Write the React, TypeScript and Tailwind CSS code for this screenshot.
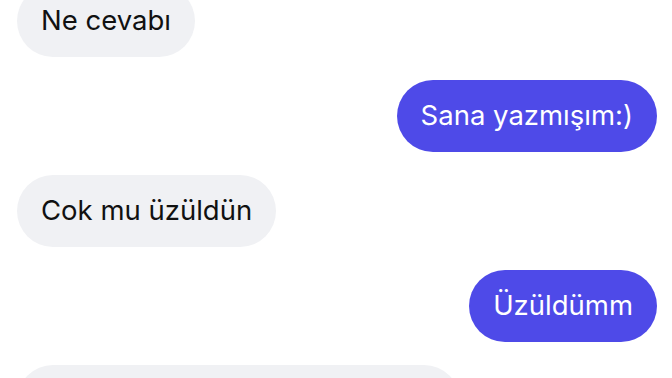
const MESSAGES = [
  { id: 1, text: "Ne cevabı", mine: false },
  { id: 2, text: "Sana yazmışım:)", mine: true },
  { id: 3, text: "Cok mu üzüldün", mine: false },
  { id: 4, text: "Üzüldümm", mine: true },
];

export default function App() {
  return (
    <div className="h-[378px] w-[672px] overflow-hidden bg-white font-['Inter','Liberation_Sans',sans-serif]">
      <div className="-mt-[15px] flex flex-col gap-[23px] pl-[17px] pr-[15px]">
        {MESSAGES.map((m) => (
          <div key={m.id} className={`flex ${m.mine ? "justify-end" : "justify-start"}`}>
            <Bubble text={m.text} mine={m.mine} />
          </div>
        ))}
        {/* next incoming message, cut off by the bottom edge */}
        <div className="flex justify-start">
          <div className="h-[72px] w-[443px] rounded-full bg-[#f0f1f4]" />
        </div>
      </div>
    </div>
  );
}

function Bubble({ text, mine }: { text: string; mine: boolean }) {
  return (
    <div
      className={`flex h-[72px] items-center whitespace-nowrap rounded-full px-6 text-[27.5px] leading-none ${
        mine ? "bg-[#4e4ae8] text-white" : "bg-[#f0f1f4] text-[#111111]"
      }`}
    >
      {text}
    </div>
  );
}
